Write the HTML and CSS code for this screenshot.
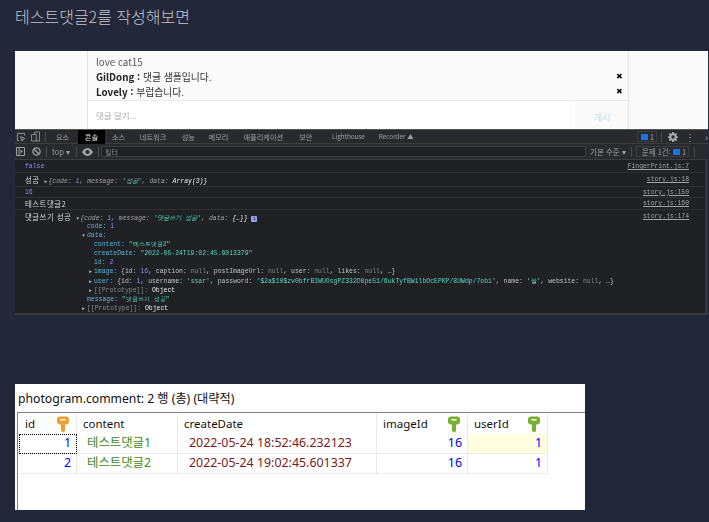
FILE: index.html
```html
<!DOCTYPE html>
<html lang="ko">
<head>
<meta charset="utf-8">
<title>테스트댓글2를 작성해보면</title>
<link rel="stylesheet" href="styles.css">
</head>
<body>
<svg class="defs" width="0" height="0" aria-hidden="true">
  <symbol id="key" viewBox="0 0 12 16">
    <path fill-rule="evenodd" d="M3 0h6q3 0 3 3v2q0 3-3 3H8v6.500L6.500 16 4 14.500V8H3Q0 8 0 5V3Q0 0 3 0zM3.500 2.500v1.500h5V2.500z"/>
  </symbol>
  <symbol id="gear" viewBox="0 0 12 12">
    <path fill-rule="evenodd" d="M5 0h2l.3 1.700 1.200.5L10 1.200 11 2.600 9.900 4l.4 1.200L12 5.500v1.500l-1.700.3-.4 1.200L11 10l-1 1-1.500-1-1.200.5L7 12H5l-.3-1.700-1.200-.5L2 11 1 10l1-1.500-.4-1.200L0 7V5.500l1.600-.3L2 4 1 2.600l1-1.400 1.500 1 1.200-.5zM6 4a2 2 0 1 0 0 4 2 2 0 0 0 0-4z"/>
  </symbol>
</svg>

<h1 class="title">테스트댓글2를 작성해보면</h1>

<section class="shot">
  <div class="page">
    <div class="side"></div>
    <div class="post">
      <div class="comments">
        <p class="line">love cat15</p>
        <p class="line"><b>GilDong :</b> 댓글 샘플입니다.<span class="del">✖</span></p>
        <p class="line"><b>Lovely :</b> 부럽습니다.<span class="del">✖</span></p>
      </div>
      <div class="add">
        <span class="ph">댓글 달기...</span>
        <span class="post-btn">게시</span>
      </div>
    </div>
    <div class="side right"></div>
  </div>

  <div class="devtools">
    <div class="tabs">
      <svg class="ic first" width="10" height="10" viewBox="0 0 11 11" fill="none" stroke="#9aa0a6"><path d="M4 9.500H1.500v-8h8V4M5 5l1.800 5 .8-2 2-.8z"/></svg>
      <svg class="ic" width="9" height="11" viewBox="0 0 11 12" fill="none" stroke="#9aa0a6"><path d="M4.500 3.500v-3h6v11h-10v-8h6v8"/></svg>
      <i class="sep"></i>
      <span class="tab t1">요소</span>
      <span class="tab active">콘솔</span>
      <span class="tab t3">소스</span>
      <span class="tab t4">네트워크</span>
      <span class="tab t5">성능</span>
      <span class="tab t6">메모리</span>
      <span class="tab t7">애플리케이션</span>
      <span class="tab t8">보안</span>
      <span class="tab t9">Lighthouse</span>
      <span class="tab t10">Recorder ▲</span>
      <span class="spacer"></span>
      <span class="badge"><i class="msg"></i>1</span>
      <i class="sep s2"></i>
      <svg class="gear" width="10" height="10"><use href="#gear"/></svg>
      <span class="dots">⋮</span>
      <span class="more">›</span>
    </div>

    <div class="filterbar">
      <svg class="ic first2" width="9" height="9" viewBox="0 0 9 9" fill="none" stroke="#9aa0a6"><path d="M.5.500h8v8h-8zM3 .5v8"/><path d="M4.500 2.800v3.400L7 4.500z" fill="#9aa0a6" stroke="none"/></svg>
      <svg class="ic block" width="9" height="9" viewBox="0 0 9 9" fill="none" stroke="#9aa0a6" stroke-width="1.400"><circle cx="4.500" cy="4.500" r="3.600"/><path d="M2 2l5 5"/></svg>
      <i class="sep"></i>
      <span class="ctx">top ▾</span>
      <i class="sep"></i>
      <svg class="ic eye" width="11" height="8" viewBox="0 0 11 8"><path fill="#9aa0a6" fill-rule="evenodd" d="M5.500 0C8 0 10 1.700 11 4 10 6.300 8 8 5.500 8S1 6.300 0 4C1 1.700 3 0 5.500 0zm0 2a2 2 0 1 0 0 4 2 2 0 0 0 0-4z"/></svg>
      <i class="sep"></i>
      <div class="filter">필터</div>
      <span class="level">기본 수준 ▾</span>
      <i class="sep"></i>
      <span class="issues">문제 1건: <i class="msg"></i>1</span>
      <i class="sep"></i>
      <svg class="gear g2" width="10" height="10"><use href="#gear"/></svg>
    </div>

    <div class="console">
      <div class="row h1"><span class="msgt"><span class="bool">false</span></span><a class="src">FingerPrint.js:7</a></div>
      <div class="row h2"><span class="msgt"><span class="kr">성공</span> <span class="tri">▶</span><em class="gr">{code: <span class="num">1</span>, message: <span class="str">'성공'</span>, data: <span class="lt">Array(3)</span><span class="lt">}</span></em></span><a class="src">story.js:18</a></div>
      <div class="row h3"><span class="msgt"><span class="num">16</span></span><a class="src">story.js:150</a></div>
      <div class="row h4"><span class="msgt"><span class="kr">테스트댓글2</span></span><a class="src">story.js:160</a></div>
      <div class="row obj">
        <div class="head"><span class="msgt"><span class="kr">댓글쓰기 성공</span> <span class="tri">▼</span><em class="gr">{code: <span class="num">1</span>, message: <span class="str">'댓글쓰기 성공'</span>, data: <span class="lt">{…}</span><span class="lt">}</span></em> <i class="info">i</i></span><a class="src">story.js:174</a></div>
        <div class="p l1"><span class="k">code:</span> <span class="num">1</span></div>
        <div class="p l0"><span class="tri">▼</span><span class="k">data:</span></div>
        <div class="p l2"><span class="k">content:</span> <span class="str">"테스트댓글2"</span></div>
        <div class="p l2"><span class="k">createDate:</span> <span class="str">"2022-05-24T19:02:45.6013379"</span></div>
        <div class="p l2"><span class="k">id:</span> <span class="num">2</span></div>
        <div class="p l3"><span class="tri">▶</span><span class="k">image:</span> <span class="lt2">{id: <span class="num">16</span>, caption: <span class="nul">null</span>, postImageUrl: <span class="nul">null</span>, user: <span class="nul">null</span>, likes: <span class="nul">null</span>, …}</span></div>
        <div class="p l3"><span class="tri">▶</span><span class="k">user:</span> <span class="lt2">{id: <span class="num">1</span>, username: <span class="str">'ssar'</span>, password: <span class="str">'$2a$10$zv0bfrBIWUOsgPZ332D8pe51/6ukTyfBWilbOcEPKP/8UWdp/7obi'</span>, name: <span class="str">'쌀'</span>, website: <span class="nul">null</span>, …}</span></div>
        <div class="p l3"><span class="tri">▶</span><span class="nul">[[Prototype]]:</span> <span class="lt">Object</span></div>
        <div class="p l1"><span class="k">message:</span> <span class="str">"댓글쓰기 성공"</span></div>
        <div class="p l0"><span class="tri">▶</span><span class="nul">[[Prototype]]:</span> <span class="lt">Object</span></div>
      </div>
    </div>
  </div>
</section>

<section class="db">
  <p class="dbtitle">photogram.comment: 2 행 (총) (대략적)</p>
  <div class="grid">
    <div class="cell hd c-id">id<svg class="key gold"><use href="#key"/></svg></div>
    <div class="cell hd">content</div>
    <div class="cell hd">createDate</div>
    <div class="cell hd">imageId<svg class="key green"><use href="#key"/></svg></div>
    <div class="cell hd">userId<svg class="key green"><use href="#key"/></svg></div>

    <div class="cell n focus">1</div>
    <div class="cell t">테스트댓글1</div>
    <div class="cell d">2022-05-24 18:52:46.232123</div>
    <div class="cell n">16</div>
    <div class="cell n sel">1</div>

    <div class="cell n">2</div>
    <div class="cell t">테스트댓글2</div>
    <div class="cell d">2022-05-24 19:02:45.601337</div>
    <div class="cell n">16</div>
    <div class="cell n">1</div>
  </div>
</section>
</body>
</html>
```

FILE: styles.css
```css
* { box-sizing: border-box; }
html, body { margin: 0; padding: 0; }
body {
  width: 709px;
  height: 522px;
  overflow: hidden;
  background: #23273a;
  font-family: "Noto Sans CJK KR", "Noto Sans", sans-serif;
}
.defs { position: absolute; }
p { margin: 0; }
i { font-style: normal; }

.title {
  margin: 0;
  padding: 4px 0 0 15px;
  height: 51px;
  font-size: 16px;
  line-height: 24px;
  font-weight: 300;
  color: #c2c4cc;
}

.shot {
  margin-left: 15px;
  width: 693px;
  height: 264px;
  display: flex;
  flex-direction: column;
  filter: blur(0.4px);
}

/* captured web page */
.page { height: 78px; display: flex; background: #fafafa; }
.side { width: 72px; }
.side.right { width: 80px; border-left: 1px solid #e4e4e4; }
.post { width: 541px; border-left: 1px solid #e4e4e4; display: flex; flex-direction: column; }
.comments { height: 51px; padding: 4px 8px 0; border-bottom: 1px solid #ececec; }
.line {
  position: relative;
  height: 15px;
  font-size: 9.800px;
  line-height: 15px;
  color: #333;
}
.line:first-child { color: #555; }
.line b { font-weight: 700; color: #222; }
.del { position: absolute; right: -3px; top: -2px; font-size: 8px; color: #111; }
.add { flex: 1; display: flex; align-items: center; background: #fff; padding-left: 8px; }
.ph { font-size: 8.500px; color: #aaa; flex: 1; }
.post-btn {
  align-self: stretch;
  width: 53px;
  background: #fafafa;
  padding: 6px 0 0 19px;
  line-height: 22px;
  font-size: 9px;
  color: #b2dffc;
}

/* devtools */
.devtools {
  position: relative;
  flex: 1;
  display: flex;
  flex-direction: column;
  background: #202124;
  border-bottom: 2px solid #3c3d40;
  color: #9aa0a6;
  overflow: hidden;
}
.devtools::after {
  content: "";
  position: absolute;
  left: 12px;
  bottom: -2px;
  width: 25px;
  height: 2px;
  background: #000;
}
.tabs, .filterbar {
  display: flex;
  align-items: center;
  background: #292a2d;
  font-size: 7.500px;
  border-bottom: 1px solid #3c3d40;
  flex: none;
}
.tabs { height: 15px; border-top: 1px solid #555; font-size: 7.200px; }
.filterbar { height: 16px; }
.ic { flex: none; }
.first { margin-left: 1px; }
.tabs .ic + .ic { margin-left: 5px; }
.sep { flex: none; width: 1px; height: 10px; background: #4a4b4f; margin: 0 5px; }
.tab { flex: none; white-space: nowrap; line-height: 14px; }
.active { background: #000; color: #e8eaed; width: 27px; text-align: center; margin-left: 8.700px; }
.t1 { margin-left: 5px; }
.t3 { margin-left: 7px; }
.t4 { margin-left: 14.700px; }
.t5 { margin-left: 15.400px; }
.t6 { margin-left: 13.700px; }
.t7 { margin-left: 15px; }
.t8 { margin-left: 16px; }
.t9 { margin-left: 19.700px; font-size: 6.300px; }
.t10 { margin-left: 14px; font-size: 6.300px; }
.spacer { flex: 1; }
.badge {
  flex: none;
  width: 20px;
  height: 11px;
  display: flex;
  align-items: center;
  gap: 2px;
  padding-left: 3px;
  border: 1px solid #3c3d40;
  color: #aab;
  font-size: 7px;
}
.msg { flex: none; display: block; width: 7px; height: 6px; background: #1a73e8; }
.s2 { margin: 0 4px; }
.gear { flex: none; fill: #a8acb1; margin-left: 2px; }
.dots { flex: none; width: 17px; text-align: center; font-size: 10px; margin-left: 4px; }
.more { flex: none; font-size: 10px; margin-left: 6px; }

.first2 { margin-left: 1px; }
.block { margin-left: 7px; }
.ctx { flex: none; width: 19px; white-space: nowrap; }
.eye { margin-left: 0; }
.filter {
  flex: none;
  width: 485px;
  height: 11px;
  line-height: 11px;
  background: #202124;
  border: 1px solid #3c3d40;
  padding-left: 3px;
  font-size: 7px;
  color: #80868b;
  margin-left: -3px;
}
.level { flex: none; white-space: nowrap; margin-left: 4px; }
.issues {
  flex: none;
  display: flex;
  align-items: center;
  gap: 2px;
  white-space: nowrap;
  height: 11px;
  width: 53px;
  padding-left: 5px;
  border: 1px solid #3c3d40;
  margin-left: -1px;
}
.g2 { margin-left: 8px; }

.console {
  flex: 1;
  font-family: "Liberation Mono", monospace;
  font-size: 6.450px;
  line-height: 9.200px;
  color: #d5d7da;
  overflow: hidden;
  border-right: 3px solid #34353a;
}
.row {
  display: flex;
  padding: 0 16px 0 10px;
  border-bottom: 1px solid #2f3033;
  overflow: hidden;
}
.row.h1 { height: 13px; padding-top: 2.400px; }
.row.h2 { height: 14px; padding-top: 2px; }
.row.h3 { height: 11px; padding-top: 0.500px; }
.row.h4 { height: 12px; padding-top: 1px; }
.row.obj { display: block; padding-top: 2px; border-bottom: 0; height: 110px; }
.head { display: flex; height: 9.500px; }
.msgt { flex: 1; white-space: pre; min-width: 0; }
.kr { font-family: "Noto Sans CJK KR", sans-serif; font-size: 7.500px; color: #d5d7da; letter-spacing: 0.400px; }
.src { flex: none; color: #a0a4a9; text-decoration: underline; font-size: 6.400px; }
.bool { color: #9980ff; }
.num { color: #9980ff; }
.str { color: #5cd5c0; }
.gr { color: #9aa0a6; }
.lt { color: #e8eaed; }
.lt2 { color: #bdc1c6; }
.nul { color: #80868b; }
.k { color: #5db0d7; }
.tri { font-size: 5px; color: #9aa0a6; margin: 0 1px; }
.info {
  display: inline-block;
  width: 6px;
  height: 6px;
  background: #9aa0f0;
  color: #202124;
  border-radius: 1px;
  font-size: 5px;
  line-height: 6px;
  text-align: center;
  font-style: normal;
}
.p { height: 9.200px; white-space: pre; }
.p .tri { display: inline-block; width: 5px; margin: 0; }
.l0 { padding-left: 57px; }
.l1 { padding-left: 62px; }
.l2 { padding-left: 69px; }
.l3 { padding-left: 64px; }

/* database grid */
.db {
  margin: 69px 0 0 15px;
  width: 570px;
  height: 126px;
  background: #fff;
  padding: 0 0 0 2px;
  overflow: hidden;
}
.dbtitle {
  height: 28px;
  padding: 6px 0 0 1px;
  font-size: 12.200px;
  line-height: 18px;
  color: #111;
  font-family: "Noto Sans", "Noto Sans CJK KR", sans-serif;
}
.grid {
  height: 98px;
  border-top: 1px solid #808080;
  border-left: 1px solid #808080;
  padding: 1px 0 0 1px;
  display: grid;
  grid-template-columns: 58px 101px 199px 91px 80px;
  grid-template-rows: 20px 20px 20px;
  justify-content: start;
  align-content: start;
  font-family: "Noto Sans", "Noto Sans CJK KR", sans-serif;
  font-size: 12.400px;
}
.cell {
  position: relative;
  white-space: nowrap;
  line-height: 18px;
  border-right: 1px solid #eaeaea;
  border-bottom: 1px solid #eaeaea;
  color: #111;
  padding: 0 6px;
}
.hd { border-bottom: 0; padding: 1px 0 0 6px; font-size: 11.500px; }
.c-id { padding-left: 6px; }
.key { position: absolute; right: 7px; top: 2px; width: 12px; height: 17px; }
.gold { fill: #f0a030; }
.green { fill: #78b030; }
.n { text-align: right; color: #0000ff; padding-right: 5px; }
.t { color: #3c8a1a; padding-left: 10px; }
.d { color: #7a1a20; padding-left: 11px; }
.sel { background: #ffffe0; }
.focus { outline: 1px dotted #000; outline-offset: -1px; }
```
